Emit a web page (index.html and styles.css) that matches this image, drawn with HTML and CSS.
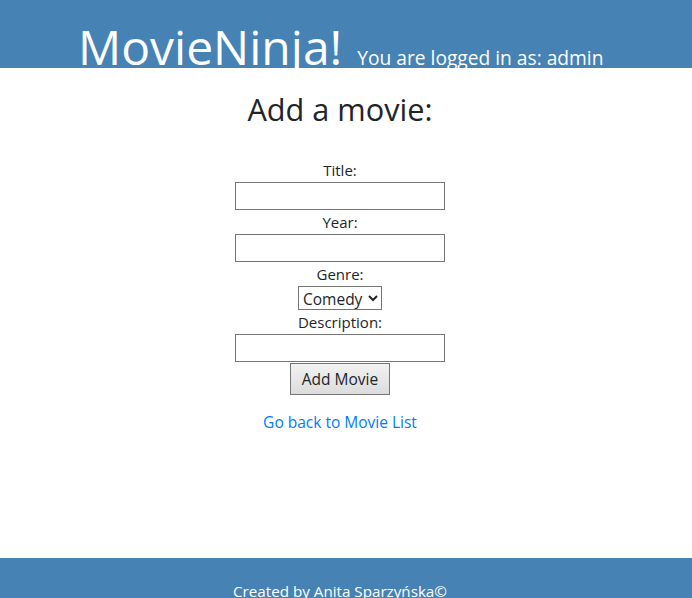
FILE: index.html
```html
<!DOCTYPE html>
<html>
<head>
<meta charset="utf-8">
<link rel="stylesheet" href="styles.css">
</head>
<body>
<header class="topbar">
  <span class="brand">MovieNinja!</span>
  <span class="user">You are logged in as: admin</span>
</header>
<main class="content">
  <h2 class="heading">Add a movie:</h2>
  <form class="movie-form">
    <label class="lbl">Title:</label>
    <input class="field" type="text">
    <label class="lbl">Year:</label>
    <input class="field" type="text">
    <label class="lbl">Genre:</label>
    <select class="genre"><option>Comedy</option></select>
    <label class="lbl">Description:</label>
    <input class="field" type="text">
    <button class="submit" type="button">Add Movie</button>
  </form>
  <a class="back" href="#">Go back to Movie List</a>
</main>
<footer class="foot">Created by Anita Sparzyńska©</footer>
</body>
</html>
```
FILE: styles.css
```css
html, body { margin: 0; padding: 0; height: 100%; }
body {
  font-family: "Open Sans", "Noto Sans", sans-serif;
  color: #212529;
  background: #fff;
  display: flex;
  flex-direction: column;
  overflow: hidden;
}
.topbar {
  background: #4682b4;
  height: 68px;
  overflow: hidden;
  padding-left: 78px;
  white-space: nowrap;
  color: #fff;
  display: flex;
  align-items: baseline;
  flex-shrink: 0;
}
.brand {
  font-size: 48px;
  line-height: 1;
  padding-top: 23px;
}
.user {
  font-size: 19.2px;
  margin-left: 15px;
}
.content {
  flex: 1;
  display: flex;
  flex-direction: column;
  align-items: center;
  padding-right: 12px;
}
.heading {
  font-weight: 400;
  font-size: 30.7px;
  margin: 21px 0 29px;
  line-height: 40px;
}
.movie-form {
  display: flex;
  flex-direction: column;
  align-items: center;
}
.lbl {
  font-size: 15px;
  line-height: 24px;
  height: 24px;
}
.field {
  width: 210px;
  height: 28px;
  box-sizing: border-box;
  border: 1px solid #767676;
  margin: 0;
  padding: 0;
}
.genre {
  font-family: inherit;
  font-size: 15.5px;
  height: 24px;
  width: 84px;
  border: 1px solid #767676;
  background: #fff;
  color: #212529;
  margin: 0;
}
.submit {
  font-family: inherit;
  font-size: 15.5px;
  width: 100px;
  height: 32px;
  margin-top: 1px;
  border: 1px solid #767676;
  background: linear-gradient(#f2f2f2, #dcdcdc);
  color: #212529;
}
.back {
  margin-top: 16px;
  font-size: 15.5px;
  color: #007bff;
  text-decoration: none;
}
.foot {
  background: #4682b4;
  height: 40px;
  flex-shrink: 0;
  color: #fff;
  text-align: center;
  padding-right: 12px;
  font-size: 15.2px;
  line-height: 20px;
  padding-top: 23px;
  box-sizing: border-box;
  overflow: hidden;
}
```
